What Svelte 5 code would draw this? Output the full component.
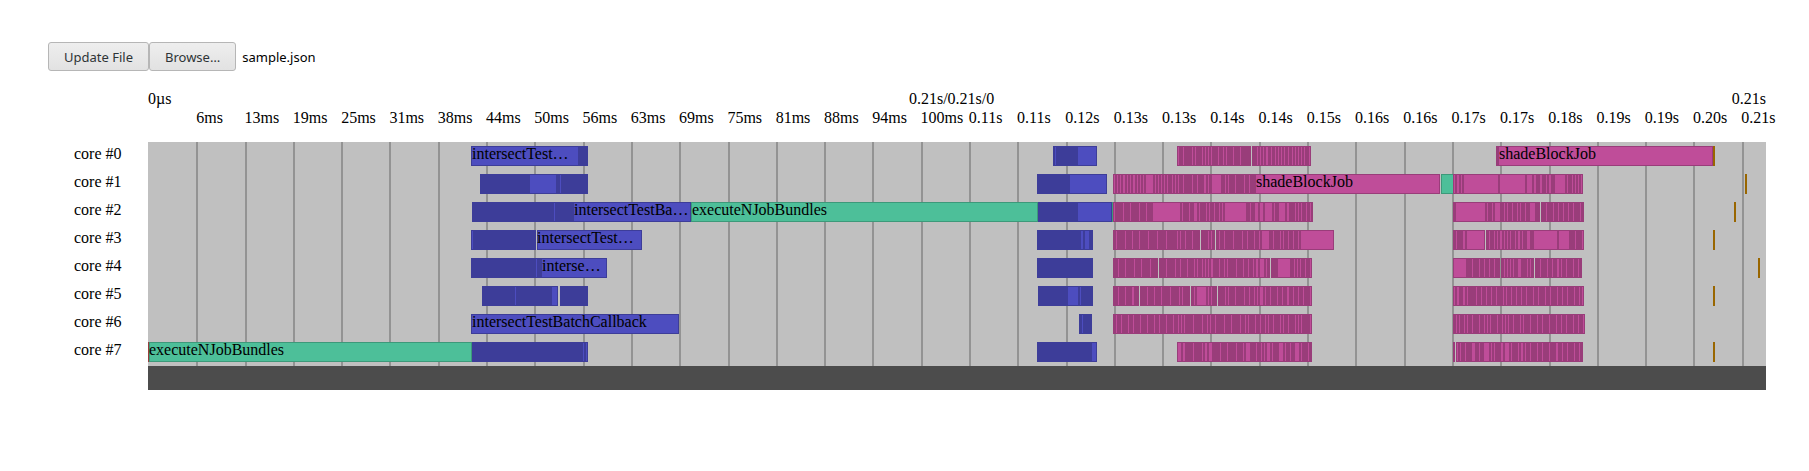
<script>
  // Horizontal units of the timeline; one tick is 6.25ms wide.
  const SPAN = 1618;
  const TICK = 48.295;
  const ROW = 28;
  const BAR = 20;

  const ticks = [
    '6ms', '13ms', '19ms', '25ms', '31ms', '38ms', '44ms', '50ms', '56ms', '63ms', '69ms',
    '75ms', '81ms', '88ms', '94ms', '100ms', '0.11s', '0.11s', '0.12s', '0.13s', '0.13s', '0.14s',
    '0.14s', '0.15s', '0.16s', '0.16s', '0.17s', '0.17s', '0.18s', '0.19s', '0.19s', '0.20s', '0.21s'
  ];

  // Each run: kind, start, end, then the visible job interiors as "offset[:width]".
  const cores = [
    {
      runs: [
        'blue 323 440 1:106',
        'blue 905 949 2 25:18',
        'pink 1029 1103 1 6 15 18 25 28 31 34 41 46 49 56 63',
        'pink 1104 1163 5 8 11 14:2 19 23 26 29 32 36 40 43 46 49 52 57',
        'pink 1348 1565 3:213',
        'gold 1565 1567'
      ],
      labels: [[324, 106, 'intersectTest…'], [1351, 213, 'shadeBlockJob']]
    },
    {
      runs: [
        'blue 332 440 50:26 80',
        'blue 889 959 33:36',
        'pink 965 1292 1 4 7 10:2 14 17 20:2 24 27 30 33:7 42 45 48 51 54 59 62 65 70 79 84 91:2 95 99:9 112 115 122 131 136 143:183',
        'green 1293 1305 1:11',
        'pink 1305 1435 1 4:2 8 11:34 47:25 74:5 81:2 87:2 93 96:2 102:10 114 119 122 125 128',
        'gold 1597 1599'
      ],
      labels: [[1108, 183, 'shadeBlockJob']]
    },
    {
      runs: [
        'blue 324 543 82 102:116',
        'green 543 890 1:345',
        'blue 890 964 40:33',
        'green 964 965',
        'pink 965 1165 1 10 17 26 33 40:27 69 76 81:3 86 93 96 101 106 109 112:21 137 142:3 147:3 152:7 161 166:6 174:2 182 185 188 193 197',
        'pink 1305 1392 3:29 34 39 42:5 51 54 59 64 67 72 77:5',
        'pink 1393 1436 5 12 17 22 27 32 39',
        'gold 1586 1588'
      ],
      labels: [[426, 116, 'intersectTestBa…'], [544, 345, 'executeNJobBundles']]
    },
    {
      runs: [
        'blue 323 388 1',
        'blue 389 494 1:103',
        'blue 889 945 44:2 48:4',
        'pink 965 1052 3 12 19 26 35 44 53 64 67 72 79',
        'pink 1053 1067 7 10',
        'pink 1068 1186 3 8 17 26 31 38 43 46:7 57 64 67 72 77 82 85:32',
        'pink 1305 1337 3 10:2 14:17',
        'pink 1338 1436 3 8 11 14:2 18 21 24 29 32:2 36 41:3 48:23 73:10 89 96',
        'gold 1565 1567'
      ],
      labels: [[389, 104, 'intersectTest…']]
    },
    {
      runs: [
        'blue 323 459 65 71:64',
        'blue 889 945',
        'pink 965 1010 5 12 21 28 37',
        'pink 1011 1122 7 16 21 28 35 38 43 46 49 52:2 60 65 68 77 84 89 94 97:2 101:4 107',
        'pink 1123 1164 7:12 23 26 29 34 39',
        'pink 1305 1352 1:12 19 26 31 36 41',
        'pink 1353 1386 3 6 9 12 17:3 26 29',
        'pink 1387 1434 5 12 17 22:2 26 31 38 43',
        'gold 1610 1612'
      ],
      labels: [[394, 64, 'interse…']]
    },
    {
      runs: [
        'blue 334 410 33 70:5',
        'blue 412 440',
        'blue 890 945 30:10 42',
        'pink 965 991 5 12 19:2',
        'pink 992 1042 7 14 21 30 39 42',
        'pink 1043 1069 3 6:9 17 20',
        'pink 1070 1164 7 10 17 26 31 36 39 42:3 47 52 59 64 69:2 75 80 85 92',
        'pink 1305 1436 1 4:2 10:2 14 23 28 33 38 43 50 53 58 63 68 73 80 85 92 97 104 109 114 121 126 129',
        'gold 1565 1567'
      ],
      labels: []
    },
    {
      runs: [
        'blue 323 531 1:206',
        'blue 931 944 3',
        'pink 965 1164 3 8 15 20 27 34 41 46 53 60 65 68 71 80 89 94 97 102 111 118 127 132 135 142 147 152 155 160 167 170 175 182 185 188 197',
        'pink 1305 1437 3 6 11 14 19 26 31 34 37 44 49 52 55 60 67 70 77 84 89 96 103 108 113 120 125 130'
      ],
      labels: [[324, 206, 'intersectTestBatchCallback']]
    },
    {
      runs: [
        'red 0 1',
        'green 1 324 1:321',
        'blue 324 440 111 114',
        'blue 889 949 55:4',
        'pink 1029 1164 1:3 6:2 16 25 28:2 32:3 43 50 59 66 69:4 79 84 87 90:3 95 102:4 108 113 118:4 124 131',
        'pink 1305 1307',
        'pink 1308 1435 1 4 9 16:3 23 28:5 35 38 45:2 49:4 55 62 65:2 69 74 81 86 93 100:2 106 111 118 123',
        'gold 1565 1567'
      ],
      labels: [[1, 322, 'executeNJobBundles']]
    }
  ];

  function parse(run) {
    const [kind, start, end, ...jobs] = run.split(' ');
    return {
      kind,
      x: +start,
      w: end - start,
      jobs: jobs.map((job) => {
        const [offset, width = 1] = job.split(':').map(Number);
        return { x: +start + offset, w: width };
      })
    };
  }

  const rows = cores.map((core) => ({ ...core, runs: core.runs.map(parse) }));
  const percent = (units) => `${(units / SPAN) * 100}%`;
</script>

<main>
  <form class="toolbar" onsubmit={(event) => event.preventDefault()}>
    <button type="submit" class="button">Update File</button>
    <label class="picker">
      <input type="file" accept=".json" />
      <span class="button">Browse…</span>
      <span class="filename">sample.json</span>
    </label>
  </form>

  <section class="profile">
    <header class="axis">
      <div class="range">
        <span>0µs</span>
        <span>0.21s/0.21s/0</span>
        <span>0.21s</span>
      </div>
      <div class="ticks" style:grid-template-columns={`repeat(${ticks.length + 1}, ${percent(TICK)})`}>
        {#each ticks as tick}<span>{tick}</span>{/each}
      </div>
    </header>

    <div class="names">
      {#each rows as _, i}<div class="name">core #{i}</div>{/each}
    </div>

    <div class="chart">
      <svg
        class="bars"
        viewBox={`0 0 ${SPAN} ${ROW * rows.length}`}
        preserveAspectRatio="none"
        shape-rendering="crispEdges"
        aria-hidden="true"
      >
        {#each ticks as _, i}
          <rect class="gridline" x={Math.round((i + 1) * TICK)} y="0" width="2" height={ROW * rows.length} />
        {/each}
        {#each rows as row, i}
          {#each row.runs as run}
            <g class={run.kind}>
              <rect class="edge" x={run.x} y={i * ROW + 4} width={run.w} height={BAR} />
              {#each run.jobs as job}
                <rect class="fill" x={job.x} y={i * ROW + 5} width={job.w} height={BAR - 2} />
              {/each}
            </g>
          {/each}
        {/each}
      </svg>
      {#each rows as row}
        <div class="row">
          {#each row.labels as [x, w, text]}
            <span class="job" style:left={percent(x)} style:width={percent(w)}>{text}</span>
          {/each}
        </div>
      {/each}
    </div>

    <div class="scroller"></div>
  </section>
</main>

<style>
  :global(body) {
    margin: 0;
    background: #fff;
  }

  main {
    padding-top: 42px;
    color: #000;
    font: 16px/19px 'Liberation Serif', 'Times New Roman', serif;
  }

  .toolbar {
    display: flex;
    align-items: center;
    margin: 0 48px 18px;
    font: 13px/18px 'Noto Sans', sans-serif;
  }

  .button {
    box-sizing: border-box;
    height: 29px;
    margin: 0;
    padding: 5px 15px;
    border: 1px solid #b6b6b6;
    border-radius: 3px;
    background: linear-gradient(#eeeeee, #e2e2e2);
    color: #2e3436;
    font: inherit;
    font-size: 13px;
    line-height: 18px;
    white-space: nowrap;
  }

  .picker {
    position: relative;
    display: flex;
    align-items: center;
  }

  .picker input {
    position: absolute;
    width: 1px;
    height: 1px;
    opacity: 0;
  }

  .filename {
    margin-left: 6px;
  }

  .profile {
    display: grid;
    grid-template-columns: 74px minmax(0, 1fr);
    padding: 0 43px 0 74px;
  }

  .axis {
    grid-column: 2;
    padding-bottom: 15px;
    white-space: nowrap;
  }

  .range {
    display: flex;
    justify-content: space-between;
  }

  .ticks {
    display: grid;
  }

  .ticks span:first-child {
    grid-column-start: 2;
  }

  .names {
    line-height: 16px;
  }

  .name,
  .row {
    box-sizing: border-box;
    height: 28px;
    padding-top: 4px;
  }

  .chart {
    position: relative;
    background: #c0c0c0;
  }

  .bars {
    position: absolute;
    inset: 0;
    width: 100%;
    height: 100%;
  }

  .row {
    position: relative;
  }

  .job {
    position: absolute;
    line-height: 16px;
    white-space: nowrap;
  }

  .scroller {
    grid-column: 2;
    height: 24px;
    background: #4c4c4c;
  }

  .gridline {
    fill: #939393;
  }

  .blue .edge {
    fill: #3d3d99;
  }

  .blue .fill {
    fill: #4d4dbf;
  }

  .pink .edge {
    fill: #993d7a;
  }

  .pink .fill {
    fill: #bf4d99;
  }

  .green .edge {
    fill: #3d997a;
  }

  .green .fill {
    fill: #4dbf99;
  }

  .gold .edge {
    fill: #996600;
  }

  .red .edge {
    fill: #993d3d;
  }
</style>
